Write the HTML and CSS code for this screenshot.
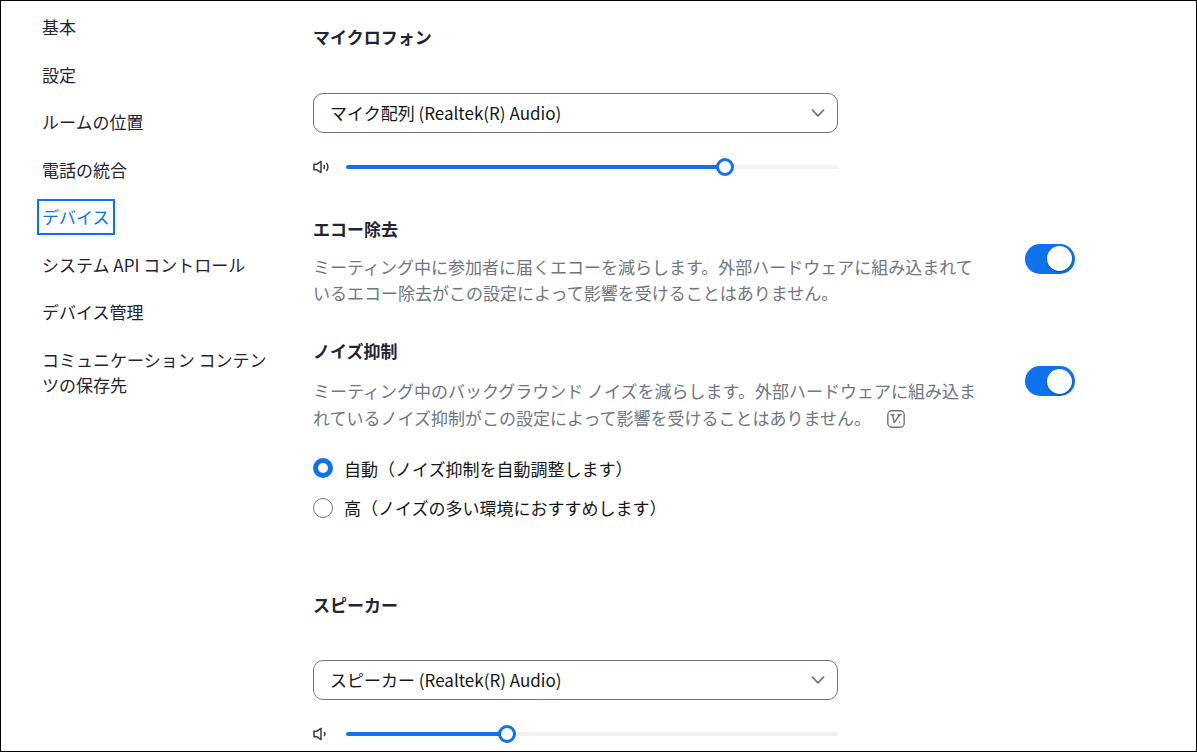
FILE: index.html
```html
<!DOCTYPE html>
<html lang="ja">
<head>
<meta charset="utf-8">
<meta name="viewport" content="width=device-width, initial-scale=1">
<title>デバイス</title>
<link rel="stylesheet" href="styles.css">
</head>
<body>
<div class="frame">
  <nav class="sidebar" aria-label="設定">
    <a class="nav-link" href="#basic">基本</a>
    <a class="nav-link" href="#settings">設定</a>
    <a class="nav-link" href="#room">ルームの位置</a>
    <a class="nav-link" href="#phone">電話の統合</a>
    <a class="nav-link nav-link-active" href="#device" aria-current="page">デバイス</a>
    <a class="nav-link" href="#api">システム API コントロール</a>
    <a class="nav-link" href="#management">デバイス管理</a>
    <a class="nav-link" href="#content">コミュニケーション コンテンツの保存先</a>
  </nav>

  <main class="content">
    <section class="device">
      <h2 class="title"><label for="mic">マイクロフォン</label></h2>
      <div class="select-box">
        <select class="select" id="mic"><option>マイク配列 (Realtek(R) Audio)</option></select>
        <svg class="chevron" viewBox="0 0 14 8" aria-hidden="true"><path d="M1.5 1.2L7 6.8l5.500-5.600"/></svg>
      </div>
      <div class="volume">
        <svg class="volume-icon" viewBox="0 0 17 14" aria-hidden="true"><path d="M1 4.300h2.700L8 1.400v11.200L3.700 9.700H1zM11 5.500q.9 1.500 0 3M13.700 3.400q2.400 3.600 0 7.200"/></svg>
        <input class="slider" type="range" min="0" max="100" value="78" style="--level:78%" aria-label="マイクロフォンの音量">
      </div>
    </section>

    <section class="option option-echo">
      <div class="option-text">
        <h2 class="title"><label for="echo">エコー除去</label></h2>
        <p class="description">ミーティング中に参加者に届くエコーを減らします。外部ハードウェアに組み込まれているエコー除去がこの設定によって影響を受けることはありません。</p>
      </div>
      <input class="switch" id="echo" type="checkbox" role="switch" checked>
    </section>

    <section class="option option-noise">
      <div class="option-text">
        <h2 class="title"><label for="noise">ノイズ抑制</label></h2>
        <p class="description description-badged">ミーティング中のバックグラウンド ノイズを減らします。外部ハードウェアに組み込まれているノイズ抑制がこの設定によって影響を受けることはありません。<svg class="badge" viewBox="0 0 18 18" aria-hidden="true"><rect class="badge-frame" x=".8" y=".8" width="16.4" height="16.4" rx="4"/><path d="M3.500 4.800h4M10.500 4.800h4M5.800 5l1.200 7.200h.6L12.500 5"/><path d="M12.200 12.200h.8"/></svg></p>
      </div>
      <input class="switch" id="noise" type="checkbox" role="switch" checked>
    </section>

    <div class="choices" role="radiogroup" aria-label="ノイズ抑制">
      <label class="choice"><input class="radio" type="radio" name="level" checked>自動（ノイズ抑制を自動調整します）</label>
      <label class="choice"><input class="radio" type="radio" name="level">高（ノイズの多い環境におすすめします）</label>
    </div>

    <section class="device">
      <h2 class="title"><label for="speaker">スピーカー</label></h2>
      <div class="select-box">
        <select class="select" id="speaker"><option>スピーカー (Realtek(R) Audio)</option></select>
        <svg class="chevron" viewBox="0 0 14 8" aria-hidden="true"><path d="M1.5 1.2L7 6.8l5.500-5.600"/></svg>
      </div>
      <div class="volume">
        <svg class="volume-icon" viewBox="0 0 17 14" aria-hidden="true"><path d="M1 4.300h2.700L8 1.400v11.200L3.700 9.700H1zM11.500 5.500q.9 1.500 0 3"/></svg>
        <input class="slider" type="range" min="0" max="100" value="32" style="--level:32%" aria-label="スピーカーの音量">
      </div>
    </section>
  </main>
</div>
</body>
</html>
```

FILE: styles.css
```css
* { box-sizing: border-box; }

:root {
  --blue: #0e72ed;
  --ink: #232333;
  --text: #131619;
  --muted: #6e7680;
  --track: #f1f1f6;
}

body {
  margin: 0;
  background: #fff;
  color: var(--ink);
  font-family: "Noto Sans CJK JP", sans-serif;
  font-size: 17px;
  line-height: 1.5;
}

.frame {
  display: flex;
  gap: 36px;
  height: 100vh;
  overflow: hidden;
  border: 1px solid #000;
  padding: 0 36px 0 41px;
}

.sidebar {
  flex: 0 0 235px;
  display: flex;
  flex-direction: column;
  align-items: flex-start;
  gap: 22px;
  padding-top: 13px;
}

.nav-link {
  color: inherit;
  text-decoration: none;
}

.nav-link-active {
  color: var(--blue);
  outline: 2px solid var(--blue);
  outline-offset: 3px;
}

.content {
  flex: 1;
  min-width: 0;
  padding-top: 23px;
}

.title {
  margin: 0;
  font-size: 17px;
  font-weight: 700;
}

.device { max-width: 525px; }

.select-box {
  display: grid;
  align-items: center;
  margin-top: 43px;
}

.select, .chevron { grid-area: 1 / 1; }

.select {
  appearance: none;
  width: 100%;
  height: 40px;
  padding: 0 40px 0 16px;
  border: 1px solid var(--muted);
  border-radius: 10px;
  background: #fff;
  color: var(--text);
  font: inherit;
}

.chevron {
  justify-self: end;
  width: 14px;
  height: 8px;
  margin-right: 13px;
  fill: none;
  stroke: var(--muted);
  stroke-width: 1.7;
  stroke-linecap: round;
  stroke-linejoin: round;
  pointer-events: none;
}

.volume {
  display: flex;
  align-items: center;
  gap: 16px;
  margin-top: 24px;
}

.volume-icon {
  flex: none;
  width: 17px;
  height: 14px;
  fill: none;
  stroke: #3a3a49;
  stroke-width: 1.5;
  stroke-linecap: round;
  stroke-linejoin: round;
}

.slider {
  appearance: none;
  flex: 1;
  min-width: 0;
  height: 20px;
  margin: 0;
  background: none;
}

.slider::-webkit-slider-runnable-track {
  height: 4px;
  border-radius: 2px;
  background: linear-gradient(to right, var(--blue) var(--level), var(--track) var(--level));
}

.slider::-webkit-slider-thumb {
  appearance: none;
  width: 18px;
  height: 18px;
  margin-top: -7px;
  border: 3px solid var(--blue);
  border-radius: 50%;
  background: #fff;
}

.option {
  display: flex;
  align-items: flex-start;
  gap: 40px;
}

.option-echo { margin-top: 39px; }
.option-noise { margin-top: 33px; }

.option-text { flex: 0 1 672px; }

.description {
  margin: 13px 0 0;
  color: var(--muted);
}

.description-badged { line-height: 27px; }

.badge {
  width: 18px;
  height: 18px;
  margin-left: 16px;
  vertical-align: -3px;
  fill: none;
  stroke: var(--muted);
  stroke-width: 1.4;
}

.switch {
  appearance: none;
  flex: none;
  display: flex;
  align-items: center;
  justify-content: flex-start;
  width: 50px;
  height: 30px;
  margin: 28px 0 0;
  padding: 3px;
  border-radius: 15px;
  background: #babacc;
}

.switch::before {
  content: "";
  width: 25px;
  height: 25px;
  border-radius: 50%;
  background: #fff;
  box-shadow: 0 1px 2px rgba(0, 0, 0, 0.4);
}

.switch:checked {
  justify-content: flex-end;
  background: var(--blue);
}

.choices {
  display: flex;
  flex-direction: column;
  align-items: flex-start;
  gap: 14px;
  margin: 25px 0 71px;
}

.choice {
  display: flex;
  align-items: center;
  gap: 11px;
  color: var(--text);
}

.radio {
  appearance: none;
  flex: none;
  width: 20px;
  height: 20px;
  margin: 0;
  border: 1px solid var(--muted);
  border-radius: 50%;
  background: #fff;
}

.radio:checked { border: 5px solid var(--blue); }
```
